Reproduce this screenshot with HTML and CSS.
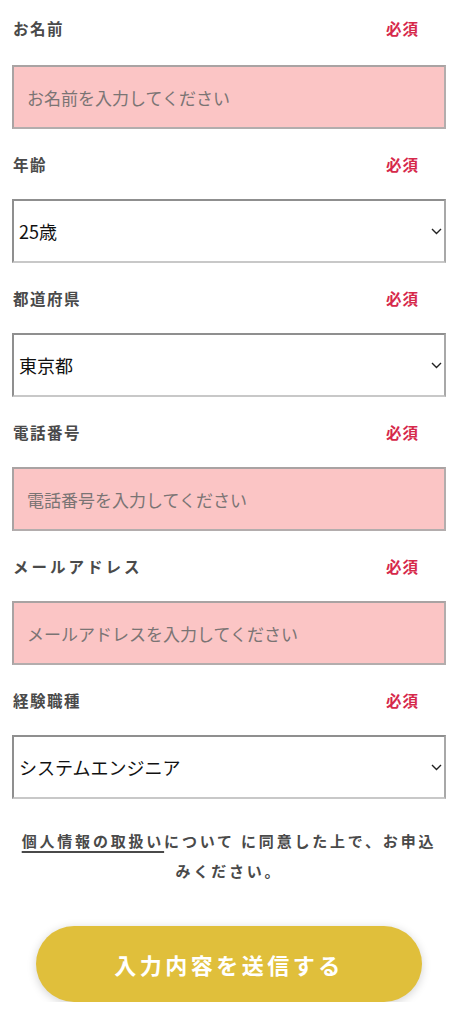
FILE: index.html
```html
<!DOCTYPE html>
<html lang="ja">
<head>
<meta charset="utf-8">
<title>Form</title>
<link rel="stylesheet" href="styles.css">
</head>
<body>
<form class="form">
  <div class="field">
    <div class="label-row"><span class="label">お名前</span><span class="req">必須</span></div>
    <input class="text-input" type="text" placeholder="お名前を入力してください">
  </div>
  <div class="field">
    <div class="label-row"><span class="label">年齢</span><span class="req">必須</span></div>
    <div class="select-wrap">
      <select class="select"><option>25歳</option></select>
      <svg class="chev" width="11" height="7" viewBox="0 0 11 7"><path d="M1 1 L5.5 5.5 L10 1" fill="none" stroke="#222" stroke-width="1.4"/></svg>
    </div>
  </div>
  <div class="field">
    <div class="label-row"><span class="label">都道府県</span><span class="req">必須</span></div>
    <div class="select-wrap">
      <select class="select"><option>東京都</option></select>
      <svg class="chev" width="11" height="7" viewBox="0 0 11 7"><path d="M1 1 L5.5 5.5 L10 1" fill="none" stroke="#222" stroke-width="1.4"/></svg>
    </div>
  </div>
  <div class="field">
    <div class="label-row"><span class="label">電話番号</span><span class="req">必須</span></div>
    <input class="text-input" type="tel" placeholder="電話番号を入力してください">
  </div>
  <div class="field">
    <div class="label-row"><span class="label label-wide">メールアドレス</span><span class="req">必須</span></div>
    <input class="text-input" type="email" placeholder="メールアドレスを入力してください">
  </div>
  <div class="field">
    <div class="label-row"><span class="label">経験職種</span><span class="req">必須</span></div>
    <div class="select-wrap">
      <select class="select"><option>システムエンジニア</option></select>
      <svg class="chev" width="11" height="7" viewBox="0 0 11 7"><path d="M1 1 L5.5 5.5 L10 1" fill="none" stroke="#222" stroke-width="1.4"/></svg>
    </div>
  </div>
  <p class="agree"><a class="agree-link" href="#">個人情報の取扱い</a>について に同意した上で、お申込みください。</p>
  <div class="btn-row">
    <button class="submit" type="button">入力内容を送信する</button>
  </div>
</form>
</body>
</html>
```

FILE: styles.css
```css
* { box-sizing: border-box; }
html, body { margin: 0; padding: 0; background: #fff; }
body {
  font-family: "Noto Sans CJK JP", "Noto Sans", sans-serif;
  color: #444;
}
.form {
  width: 434px;
  margin-left: 12px;
  padding-top: 16px;
}
.field {
  display: flex;
  flex-direction: column;
  gap: 23px;
  margin-bottom: 23px;
}
.field:first-child .label-row { margin-bottom: 2px; }
.label-row {
  display: flex;
  justify-content: space-between;
  align-items: center;
  height: 24px;
  padding-left: 1px;
  padding-right: 27px;
}
.label {
  font-size: 15.5px;
  font-weight: 700;
  color: #4a4a4a;
  letter-spacing: 1.5px;
}
.label-wide { letter-spacing: 3px; }
.req {
  font-size: 15.5px;
  font-weight: 700;
  color: #d6294b;
  letter-spacing: 1px;
}
.text-input {
  width: 100%;
  height: 64px;
  background: #fbc5c5;
  border: 2px solid #b3adad;
  border-top-color: #a9a3a3;
  border-left-color: #a9a3a3;
  padding: 0 0 0 13px;
  font-family: "Noto Sans CJK JP", sans-serif;
  font-size: 17px;
  color: #333;
  outline: none;
  border-radius: 0;
}
.text-input::placeholder { color: #7a7474; opacity: 1; }
.select-wrap {
  position: relative;
}
.select {
  width: 100%;
  height: 64px;
  appearance: none;
  -webkit-appearance: none;
  background: #fff;
  border: 2px solid #8f8f8f;
  border-bottom-color: #c8c8c8;
  border-right-color: #a8a8a8;
  border-radius: 0;
  padding: 0 0 0 5px;
  font-family: "Noto Sans CJK JP", sans-serif;
  font-size: 18px;
  color: #111;
  outline: none;
}
.chev {
  position: absolute;
  right: 4px;
  top: 29px;
}
.agree {
  margin: 27px 0 0;
  text-align: center;
  font-size: 15px;
  font-weight: 700;
  line-height: 30px;
  letter-spacing: 2.8px;
  color: #4a4a4a;
  padding: 0 4px;
}
.agree-link {
  color: #4a4a4a;
  text-decoration: underline;
  text-decoration-thickness: 1.5px;
  text-underline-offset: 4px;
}
.btn-row {
  display: flex;
  justify-content: center;
  margin-top: 40px;
}
.submit {
  width: 386px;
  height: 76px;
  border: none;
  border-radius: 38px;
  background: #e0bf3b;
  color: #fff;
  font-family: "Noto Sans CJK JP", sans-serif;
  font-size: 22px;
  font-weight: 700;
  letter-spacing: 3.5px;
  box-shadow: 0 2px 10px rgba(0,0,0,0.18);
}
```
